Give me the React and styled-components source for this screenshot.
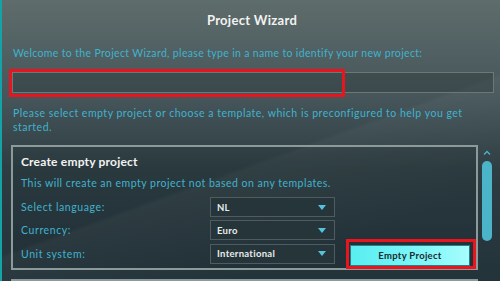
import React from "react";
import styled, { createGlobalStyle } from "styled-components";

const Global = createGlobalStyle`
  html, body { margin: 0; padding: 0; background: #22323a; }
  body { font-family: "Lato", "Open Sans", sans-serif; }
`;

const Wizard = styled.div`
  box-sizing: border-box;
  width: 500px;
  height: 281px;
  overflow: hidden;
  border-left: 2px solid #14a4a8;
  padding: 0 6px 0 8px;
  background:
    linear-gradient(160deg, rgba(255,255,255,0) 55%, rgba(255,255,255,0.035) 56%, rgba(255,255,255,0) 80%),
    linear-gradient(180deg, #5e6c6b 0%, #45555a 35%, #2d3d42 60%, #23333a 100%);
  display: flex;
  flex-direction: column;
`;

const Title = styled.h1`
  margin: 12px 0 0;
  height: 16px;
  line-height: 16px;
  font-size: 13px;
  font-weight: 700;
  color: #f2f2f2;
  text-align: center;
  letter-spacing: 0.3px;
`;

const Prompt = styled.p`
  margin: ${(p) => p.$top}px 0 0 3px;
  font-size: 10.5px;
  line-height: 14px;
  color: #40b3cf;
  letter-spacing: ${(p) => p.$ls}px;
`;

const Annotated = styled.div`
  position: relative;
  margin-top: ${(p) => p.$top || 0}px;
`;

const Highlight = styled.div`
  position: absolute;
  left: ${(p) => p.$l}px;
  top: ${(p) => p.$t}px;
  width: ${(p) => p.$w}px;
  height: ${(p) => p.$h}px;
  border: 3px solid #e8141e;
  box-sizing: border-box;
  pointer-events: none;
`;

const NameInput = styled.div`
  box-sizing: border-box;
  height: 21px;
  margin-left: 2px;
  background: rgba(40, 52, 52, 0.35);
  border: 1px solid #6c7876;
`;

const Scroller = styled.div`
  display: flex;
  margin-top: 11px;
  margin-left: 1px;
  gap: 4px;
  flex: 1;
  min-height: 0;
`;

const List = styled.div`
  width: 467px;
  display: flex;
  flex-direction: column;
  gap: 9px;
`;

const Card = styled.section`
  box-sizing: border-box;
  border: 2px solid #8d9a9a;
  background: rgba(0, 0, 0, 0.06);
  padding: 6px 6px 4px 8px;
  flex-shrink: 0;
  min-height: ${(p) => p.$minH || 0}px;
`;

const CardTitle = styled.h2`
  margin: 0;
  font-size: 12px;
  line-height: 18px;
  font-weight: 700;
  color: #f3f3f3;
  letter-spacing: 0.2px;
`;

const CardDesc = styled.p`
  margin: 5px 0 0;
  font-size: 10.5px;
  line-height: 14px;
  color: #40b3cf;
  letter-spacing: 0.48px;
`;

const Form = styled.div`
  margin-top: 7px;
  display: grid;
  grid-template-columns: 174px 125px 120px;
  column-gap: 15px;
  row-gap: 3px;
  align-items: center;
`;

const Label = styled.span`
  font-size: 10.5px;
  color: #40b3cf;
  letter-spacing: 0.6px;
`;

const Select = styled.div`
  box-sizing: border-box;
  height: 20px;
  display: flex;
  align-items: center;
  justify-content: space-between;
  padding: 0 8px 0 6px;
  background: #263539;
  border: 1px solid #4f5c5f;
  font-size: 9.5px;
  font-weight: 700;
  color: #e9ecec;
  letter-spacing: 0.3px;
`;

const Arrow = styled.span`
  width: 0;
  height: 0;
  border-left: 4px solid transparent;
  border-right: 4px solid transparent;
  border-top: 5px solid #55c3dd;
`;

const ButtonCell = styled.div`
  position: relative;
  height: 21px;
`;

const EmptyButton = styled.button`
  box-sizing: border-box;
  width: 120px;
  height: 21px;
  border: 1px solid #2a7f86;
  background: linear-gradient(90deg, #58eef1 0%, #7ff6f8 60%, #a6fdfd 100%);
  font-family: inherit;
  font-size: 9.5px;
  font-weight: 700;
  color: #1b2a2e;
  letter-spacing: 0.3px;
  padding: 0;
`;

const Scrollbar = styled.div`
  width: 10px;
  display: flex;
  flex-direction: column;
  align-items: center;
  padding-top: 5px;
`;

const Caret = styled.svg`
  width: 8px;
  height: 5px;
`;

const Thumb = styled.div`
  margin-top: 6px;
  width: 10px;
  height: 80px;
  border-radius: 5px;
  background: #4bb4c9;
`;

const rows = [
  { label: "Select language:", value: "NL" },
  { label: "Currency:", value: "Euro" },
  { label: "Unit system:", value: "International" },
];

export default function App() {
  return (
    <>
      <Global />
      <Wizard>
        <Title>Project Wizard</Title>
        <Prompt $top={18} $ls={0.34}>
          Welcome to the Project Wizard, please type in a name to identify your new project:
        </Prompt>
        <Annotated $top={12}>
          <NameInput />
          <Highlight $l={-1} $t={-3} $w={336} $h={28} />
        </Annotated>
        <Prompt $top={13} $ls={0.5}>
          Please select empty project or choose a template, which is preconfigured to help you get started.
        </Prompt>
        <Scroller>
          <List>
            <Card>
              <CardTitle>Create empty project</CardTitle>
              <CardDesc>This will create an empty project not based on any templates.</CardDesc>
              <Form>
                {rows.map((r, i) => (
                  <React.Fragment key={r.label}>
                    <Label>{r.label}</Label>
                    <Select>
                      {r.value}
                      <Arrow />
                    </Select>
                    {i === 2 ? (
                      <ButtonCell>
                        <EmptyButton>Empty Project</EmptyButton>
                        <Highlight $l={-4} $t={-4} $w={130} $h={30} />
                      </ButtonCell>
                    ) : (
                      <span />
                    )}
                  </React.Fragment>
                ))}
              </Form>
            </Card>
            <Card $minH={40} />
          </List>
          <Scrollbar>
            <Caret viewBox="0 0 8 5">
              <path d="M1 4.5 L4 1.5 L7 4.5" fill="none" stroke="#4bb4c9" strokeWidth="1.4" />
            </Caret>
            <Thumb />
          </Scrollbar>
        </Scroller>
      </Wizard>
    </>
  );
}
